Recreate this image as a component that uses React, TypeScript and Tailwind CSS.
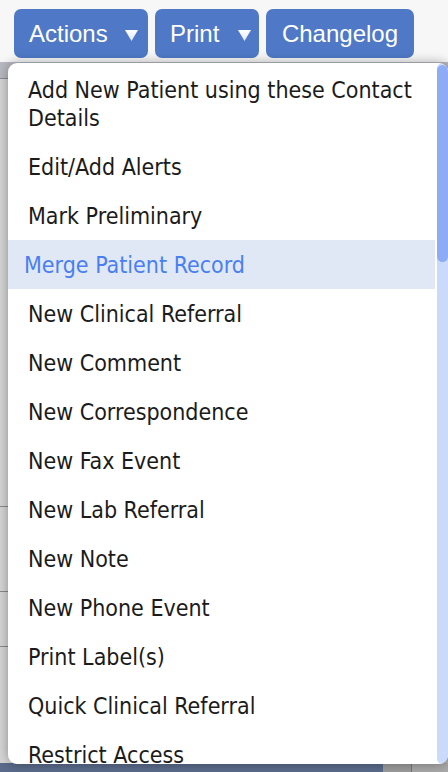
import React from "react";

const items = [
  "Add New Patient using these Contact Details",
  "Edit/Add Alerts",
  "Mark Preliminary",
  "Merge Patient Record",
  "New Clinical Referral",
  "New Comment",
  "New Correspondence",
  "New Fax Event",
  "New Lab Referral",
  "New Note",
  "New Phone Event",
  "Print Label(s)",
  "Quick Clinical Referral",
  "Restrict Access",
];

const Arrow: React.FC<{ className?: string }> = ({ className }) => (
  <svg width="13" height="11" viewBox="0 0 13 11" className={className}>
    <defs>
      <linearGradient id="arr" x1="0" y1="0" x2="0" y2="1">
        <stop offset="0" stopColor="#ffffff" />
        <stop offset="1" stopColor="#dfe7f7" />
      </linearGradient>
    </defs>
    <polygon points="0,0 13,0 6.5,11" fill="url(#arr)" />
  </svg>
);

const App: React.FC = () => {
  const active = "Merge Patient Record";

  return (
    <div className="relative h-[772px] w-[448px] overflow-hidden bg-[#f7f7f7]">
      {/* top button bar */}
      <div className="flex gap-[7px] pl-[14px] pt-[9px] font-['Liberation_Sans',Arial,sans-serif] text-[24px] text-white">
        <button className="flex h-[49px] w-[134px] items-center rounded-[7px] bg-[#4f79c6] pl-[15px]">
          Actions
          <Arrow className="ml-[17px] mt-[3px]" />
        </button>
        <button className="flex h-[49px] w-[104px] items-center rounded-[7px] bg-[#4f79c6] pl-[15px]">
          Print
          <Arrow className="ml-[19px] mt-[3px]" />
        </button>
        <button className="flex h-[49px] w-[148px] items-center justify-center rounded-[7px] bg-[#4f79c6]">
          Changelog
        </button>
      </div>

      {/* page content behind the menu */}
      <div className="mt-[4px] flex h-[701px] flex-col bg-gradient-to-r from-[#d6d6d6] to-[#b4b4b4]">
        <div className="h-[17px] border-b border-[#8c8c95] bg-[#b9b9c2]" />
        <div className="h-[428px] border-b border-[#8a8a8a]" />
        <div className="h-[85px] border-b border-[#8a8a8a]" />
        <div className="h-[55px] border-b border-[#8a8a8a]" />
      </div>
      <div className="flex h-[9px]">
        <div className="w-[383px] bg-[#5a6b8b]" />
        <div className="w-[29px] border-r border-[#777] bg-[#9c9c9c]" />
        <div className="flex-1 bg-[#a9a9a9]" />
      </div>

      {/* dropdown menu */}
      <div className="absolute left-[8px] right-0 top-[63px] h-[701px] overflow-hidden rounded-[9px] bg-white shadow-[0_0_12px_rgba(0,0,0,0.35)]">
        <div className="flex h-full">
          <ul className="flex-1 pr-[2px] pt-[2px] font-['DejaVu_Sans_Condensed','DejaVu_Sans',sans-serif] text-[23px] leading-[28px] text-[#1b1b1b] [font-stretch:condensed]">
            {items.map((item) => (
              <li
                key={item}
                className={
                  item === active
                    ? "bg-[#e1e8f5] py-[10.5px] pl-[16px] pr-[8px] text-[#4a7ff0]"
                    : "py-[10.5px] pl-[20px] pr-[8px]"
                }
              >
                {item}
              </li>
            ))}
          </ul>
          <div className="flex w-[11px] flex-col rounded-full bg-[#cbdafa]">
            <div className="mt-[2px] h-[197px] rounded-full bg-[#8dacf5]" />
          </div>
        </div>
      </div>
    </div>
  );
};

export default App;
